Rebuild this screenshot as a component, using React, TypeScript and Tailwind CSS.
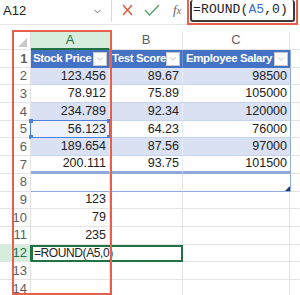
import { ChevronDown } from "lucide-react";

const ROWS = [
  { a: "123.456", b: "89.67", c: "98500" },
  { a: "78.912", b: "75.89", c: "105000" },
  { a: "234.789", b: "92.34", c: "120000" },
  { a: "56.123", b: "64.23", c: "76000" },
  { a: "189.654", b: "87.56", c: "97000" },
  { a: "200.111", b: "93.75", c: "101500" },
];

const EXTRA = [
  { n: 9, a: "123" },
  { n: 10, a: "79" },
  { n: 11, a: "235" },
];

function RowNum({ n, active }: { n: number; active?: boolean }) {
  return (
    <div
      className={`w-[31px] shrink-0 flex items-center justify-end pr-[3px] text-[13px] border-b border-r border-[#e3e3e3] ${
        active ? "bg-[#d6ecdd] text-[#217346] border-r-[#217346]" : "text-[#5e5e5e]"
      }`}
    >
      {n}
    </div>
  );
}

function FilterBtn() {
  return (
    <span className="ml-auto mr-[2px] flex h-[14px] w-[14px] shrink-0 items-center justify-center border border-[#c9c9c9] bg-white">
      <ChevronDown size={10} strokeWidth={1.5} className="text-[#9a9a9a]" />
    </span>
  );
}

export default function App() {
  return (
    <div className="relative h-[295px] w-[300px] overflow-hidden bg-white font-['Liberation_Sans',Arial,sans-serif] text-[#222]">
      {/* formula bar */}
      <div className="flex h-[25px] items-start border-b border-[#e6e6e6]">
        <div className="flex h-[22px] w-[112px] items-center border-r border-[#d6d6d6] pl-[3px] pr-[8px]">
          <span className="text-[13px]">A12</span>
          <ChevronDown size={11} strokeWidth={2} className="ml-auto text-[#666]" />
        </div>
        <div className="flex h-[22px] items-center pl-[10px]">
          <svg width="11" height="12" viewBox="0 0 11 12" className="mb-[3px]">
            <path d="M1 1 L10 11 M10 1 L1 11" stroke="#e0553f" strokeWidth="1.4" fill="none" />
          </svg>
          <svg width="16" height="12" viewBox="0 0 16 12" className="ml-[11px] mb-[3px]">
            <path d="M1 6 L5.5 11 L15 1" stroke="#56a46a" strokeWidth="1.4" fill="none" />
          </svg>
          <span className="ml-[13px] mb-[3px] font-['Liberation_Serif',serif] text-[13px] italic text-[#666]">
            f<span className="text-[10px]">x</span>
          </span>
        </div>
        <div className="ml-[6px] -mt-[2px] mr-[2px] h-[27px] flex-1 border-2 border-[#e8604c] p-[1px] pt-0">
          <div className="flex h-[22px] items-center rounded-[3px] border-2 border-t-0 border-[#3a3a3a] pl-[1px] font-['Liberation_Mono',monospace] text-[13px] tracking-[0.1px] text-[#222]">
            =ROUND(<span className="text-[#3a6fd0]">A5</span>,0)
          </div>
        </div>
      </div>

      {/* sheet */}
      <div className="mt-[6px] flex flex-col">
        {/* column headers */}
        <div className="flex h-[19px] text-[13px] text-[#5e5e5e]">
          <div className="relative w-[31px] border-b border-r border-[#e3e3e3]">
            <svg width="9" height="9" viewBox="0 0 9 9" className="absolute right-[3px] bottom-[2px]">
              <path d="M9 0 L9 9 L0 9 Z" fill="#c9c9c9" />
            </svg>
          </div>
          <div className="flex w-[79px] items-center justify-center border-b-2 border-r border-b-[#217346] border-r-[#e3e3e3] bg-[#d6ecdd] text-[#217346]">
            A
          </div>
          <div className="flex w-[73px] items-center justify-center border-b border-r border-[#e3e3e3]">B</div>
          <div className="flex w-[107px] items-center justify-center border-b border-r border-[#e3e3e3]">C</div>
          <div className="flex-1 border-b border-[#e3e3e3]" />
        </div>

        {/* row 1 table header */}
        <div className="flex h-[17.7px] whitespace-nowrap text-[11.5px] font-bold tracking-[-0.4px] text-white">
          <RowNum n={1} />
          <div className="flex w-[79px] items-center overflow-hidden border-r border-[#6f8fd3] bg-[#4472c4] pl-[2px]">
            Stock Price
            <FilterBtn />
          </div>
          <div className="flex w-[73px] items-center overflow-hidden border-r border-[#6f8fd3] bg-[#4472c4] pl-[2px]">
            Test Score
            <FilterBtn />
          </div>
          <div className="flex w-[107px] items-center overflow-hidden bg-[#4472c4] pl-[3px]">
            Employee Salary
            <FilterBtn />
          </div>
          <div className="flex-1 border-b border-l border-[#e3e3e3] border-l-[#8eaadb]" />
        </div>

        {/* data rows */}
        {ROWS.map((r, i) => {
          const n = i + 2;
          const band = i % 2 === 0;
          const last = i === ROWS.length - 1;
          const bg = band ? "bg-[#d9e1f2]" : "bg-white";
          const bb = last ? "border-b-[3px] border-b-[#8eaadb]" : "border-b border-b-[#c7d4ee]";
          const sel = n === 5;
          return (
            <div key={n} className="flex h-[17.7px] text-[12.5px]">
              <RowNum n={n} />
              <div
                className={`relative flex w-[79px] items-center justify-end border-r border-r-[#e8edf7] pr-[3px] ${bb} ${
                  sel ? "bg-[#edf2fb]" : bg
                }`}
              >
                {r.a}
                {sel && (
                  <div className="absolute inset-[-1px] border border-[#4f7fd9]">
                    <span className="absolute -left-[2px] -top-[2px] h-[4px] w-[4px] bg-[#4f7fd9]" />
                    <span className="absolute -right-[2px] -top-[2px] h-[4px] w-[4px] bg-[#4f7fd9]" />
                    <span className="absolute -bottom-[2px] -left-[2px] h-[4px] w-[4px] bg-[#4f7fd9]" />
                    <span className="absolute -bottom-[2px] -right-[2px] h-[4px] w-[4px] bg-[#4f7fd9]" />
                  </div>
                )}
              </div>
              <div className={`flex w-[73px] items-center justify-end border-r border-r-[#e8edf7] pr-[3px] ${bb} ${bg}`}>
                {r.b}
              </div>
              <div className={`flex w-[107px] items-center justify-end pr-[3px] ${bb} ${bg}`}>{r.c}</div>
              <div className="flex-1 border-b border-l border-[#e3e3e3] border-l-[#8eaadb]" />
            </div>
          );
        })}

        {/* row 8 (empty table row) */}
        <div className="flex h-[17.7px] text-[12.5px]">
          <RowNum n={8} />
          <div className="w-[79px] border-b border-r border-b-[#8eaadb] border-r-[#e3e3e3]" />
          <div className="w-[73px] border-b border-r border-b-[#8eaadb] border-r-[#e3e3e3]" />
          <div className="relative w-[107px] border-b border-b-[#8eaadb]">
            <svg width="5" height="5" viewBox="0 0 5 5" className="absolute right-0 bottom-0">
              <path d="M5 0 L5 5 L0 5 Z" fill="#1f3a6e" />
            </svg>
          </div>
          <div className="flex-1 border-b border-l border-[#e3e3e3] border-l-[#8eaadb]" />
        </div>

        {EXTRA.map((r) => (
          <div key={r.n} className="flex h-[17.7px] text-[12.5px]">
            <RowNum n={r.n} />
            <div className="flex w-[79px] items-center justify-end border-b border-r border-[#e3e3e3] pr-[3px]">{r.a}</div>
            <div className="w-[73px] border-b border-r border-[#e3e3e3]" />
            <div className="w-[107px] border-b border-r border-[#e3e3e3]" />
            <div className="flex-1 border-b border-[#e3e3e3]" />
          </div>
        ))}

        {/* row 12 editing */}
        <div className="flex h-[17.7px] text-[12px]">
          <RowNum n={12} active />
          <div className="flex w-[152px] items-center whitespace-nowrap border-2 border-[#217346] pl-[1px] tracking-[-0.4px]">
            =ROUND(A5,0)
          </div>
          <div className="w-[107px] border-b border-r border-[#e3e3e3]" />
          <div className="flex-1 border-b border-[#e3e3e3]" />
        </div>

        {[13, 14].map((n) => (
          <div key={n} className="flex h-[17.7px] text-[12.5px]">
            <RowNum n={n} />
            <div className="w-[79px] border-b border-r border-[#e3e3e3]" />
            <div className="w-[73px] border-b border-r border-[#e3e3e3]" />
            <div className="w-[107px] border-b border-r border-[#e3e3e3]" />
            <div className="flex-1 border-b border-[#e3e3e3]" />
          </div>
        ))}
      </div>

      {/* red annotation around column A */}
      <div className="pointer-events-none absolute left-[12px] top-[30px] h-[265px] w-[100px] border-2 border-[#e8604c]" />
    </div>
  );
}
